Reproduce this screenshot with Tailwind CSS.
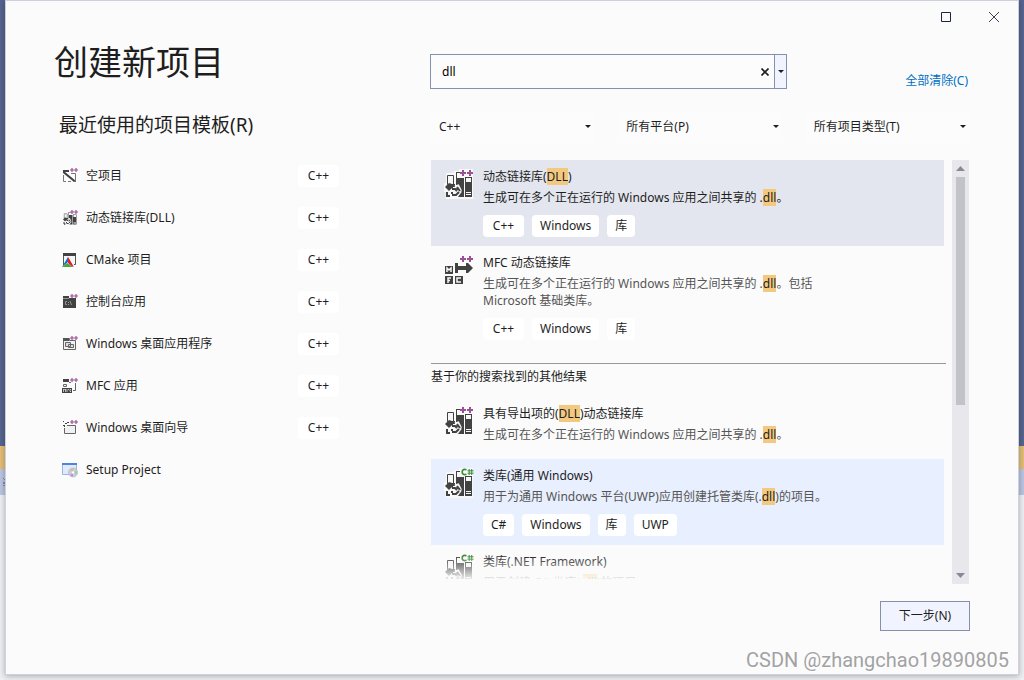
<!DOCTYPE html>
<html lang="zh-CN">
<head>
<meta charset="utf-8">
<title>创建新项目</title>
<script src="https://cdn.jsdelivr.net/npm/@tailwindcss/browser@4"></script>
</head>
<body class="relative h-screen overflow-hidden font-['Noto_Sans','Noto_Sans_CJK_SC',sans-serif] text-xs text-[#1e1e1e]">

<!-- Shared symbols -->
<svg class="hidden" aria-hidden="true">
  <symbol id="books" viewBox="0 0 32 32">
    <path d="M4.500 7.500h6v9h-6z" fill="#f6f6f6" stroke="#424242"/>
    <path d="M13 4h4v1h-3v5h7v19h-8z" fill="#424242"/>
    <path d="M14 5h2v5h5V9h-4V5z" fill="#f6f6f6"/>
    <path d="M22 9h7v20h-7z" fill="#424242"/>
    <path d="M23 10h5v4h-5z" fill="#f6f6f6"/>
    <path d="M23 24h5v1h-5zM23 26h5v1h-5z" fill="#f6f6f6"/>
    <path d="M6 15l-4 4 4 4 2-2h2v-2h2v-3H9z" fill="#424242"/>
    <path d="M4 23v5h3M9 28h4v-3h3l-3 4M8 22h4l2 2 3-2-2-4-3 1" fill="none" stroke="#f6f6f6" stroke-width="3"/>
    <path d="M4 24v4h3M9 21h3l2 2M9 27h4l3-3M14 19l3 4" fill="none" stroke="#424242" stroke-width="2"/>
    <path d="M4 28h2M9 24v2" stroke="#424242" stroke-width="2"/>
  </symbol>
  <symbol id="halo" viewBox="0 0 32 32"><path d="M3 5h8V3h5V1h14v28l1 2H3v-7H1v-9h2z" fill="#f8f8f8"/></symbol>
  <symbol id="cpp" viewBox="0 0 32 32"><path d="M19 2h2v2h2v2h-2v2h-2V6h-2V4h2zM26 2h2v2h2v2h-2v2h-2V6h-2V4h2z" fill="#9b4f96"/></symbol>
  <symbol id="csharp" viewBox="0 0 32 32"><path d="M23.500 2.800C20.500 1.800 19.200 3 19.200 5s1.300 3.200 4.300 2.200" fill="none" stroke="#388a34" stroke-width="1.700"/><path d="M26.200 2v6M28.700 2v6M24.500 3.800h6M24.500 6.200h6" fill="none" stroke="#388a34"/></symbol>
  <symbol id="pp16" viewBox="0 0 16 16"><path d="M10 0v4M8 2h4M14 0v4M12 2h4" stroke="#9b4f96" stroke-width="1.200"/></symbol>
  <symbol id="tri" viewBox="0 0 6 3"><path d="M0 0h6L3 3z" fill="currentColor"/></symbol>
</svg>

<!-- Application behind the dialog -->
<div class="absolute inset-0 flex flex-col" aria-hidden="true">
  <div class="h-[446px] bg-[#56648f]"></div>
  <div class="h-[23px] bg-[#e3bd74]"></div>
  <div class="flex h-[26px] items-center bg-[#bac5e0]">
    <svg class="ml-[3px] h-2 w-2" viewBox="0 0 8 8"><path d="M0 0h1v1H0zM1 1h1v1H1zM0 4h2v2H0zM0 7h2v1H0z" fill="#858ca5"/></svg>
  </div>
  <div class="flex-1 bg-[#eeeff3]"></div>
</div>

<div class="relative flex h-full flex-col px-[5px] pb-[5px]">
  <div class="flex min-h-0 flex-1 flex-col border border-[#ccd0df] bg-[#fbfbfb] shadow-[0_1px_6px_rgba(0,0,0,0.3)]">
    <header class="flex h-8 shrink-0 justify-end">
      <button class="flex w-12 items-center justify-center" aria-label="最大化">
        <svg class="h-[10px] w-[10px]" viewBox="0 0 10 10"><path d="M.5.5h9v9h-9z" fill="none" stroke="#1b2440"/></svg>
      </button>
      <button class="flex w-12 items-center justify-center" aria-label="关闭">
        <svg class="h-[10px] w-[10px]" viewBox="0 0 10 10"><path d="M0 0l10 10M10 0L0 10" fill="none" stroke="#3b4258"/></svg>
      </button>
    </header>

    <main class="flex min-h-0 flex-1 px-12">
      <section class="w-[376px] shrink-0 pt-[9px]">
        <h1 class="text-[34px] leading-10">创建新项目</h1>
        <h2 class="mt-[29px] pl-[5px] text-[19px] leading-7">最近使用的项目模板(R)</h2>
        <ul class="mt-4 mr-[91px] pl-2">
          <li class="flex h-[42px] items-center gap-2">
            <svg class="h-4 w-4" viewBox="0 0 16 16"><path d="M1 2h6v2H3l11 9v1h-2L1 5z" fill="#424242"/><path d="M1.500 7v6.500H4M6 13.500h3M11 13.500h2.500V5.500H9" fill="none" stroke="#777"/><use href="#pp16"/></svg>
            <span class="flex-1">空项目</span><span class="w-[41px] rounded bg-white text-center leading-[22px]">C++</span>
          </li>
          <li class="flex h-[42px] items-center gap-2">
            <svg class="h-4 w-4" viewBox="0 0 16 16"><use href="#books" width="16" height="16"/><use href="#pp16"/></svg>
            <span class="flex-1">动态链接库(DLL)</span><span class="w-[41px] rounded bg-white text-center leading-[22px]">C++</span>
          </li>
          <li class="flex h-[42px] items-center gap-2">
            <svg class="h-4 w-4" viewBox="0 0 16 16"><path d="M1.500 13V1.500h12v11H12" fill="#f6f6f6" stroke="#555"/><path d="M1 1h13v3H1z" fill="#424242"/><path d="M6 5L0 15l6-5z" fill="#2068c8"/><path d="M6 5l6 10-5-3z" fill="#e0202c"/><path d="M0 15l5-4 6 4z" fill="#45a843"/><path d="M6 5l5 10-5-4z" fill="#e0202c"/></svg>
            <span class="flex-1">CMake 项目</span><span class="w-[41px] rounded bg-white text-center leading-[22px]">C++</span>
          </li>
          <li class="flex h-[42px] items-center gap-2">
            <svg class="h-4 w-4" viewBox="0 0 16 16"><path d="M1 2h6v2h7v10H1z" fill="#424242"/><path d="M1 4.500h6M5 7.500H3.500v3H5M6.500 8v1M6.500 10v1M8 7l1.500 4" fill="none" stroke="#aaa" stroke-width=".8"/><use href="#pp16"/></svg>
            <span class="flex-1">控制台应用</span><span class="w-[41px] rounded bg-white text-center leading-[22px]">C++</span>
          </li>
          <li class="flex h-[42px] items-center gap-2">
            <svg class="h-4 w-4" viewBox="0 0 16 16"><path d="M1.500 2.500h6v2h6v9h-12z" fill="#f1f1f1" stroke="#666"/><path d="M1 2h6v3H1z" fill="#555"/><path d="M3.500 6.500h5v4h-5zM6.500 8.500h5v3h-5z" fill="#ddd" stroke="#666"/><use href="#pp16"/></svg>
            <span class="flex-1">Windows 桌面应用程序</span><span class="w-[41px] rounded bg-white text-center leading-[22px]">C++</span>
          </li>
          <li class="flex h-[42px] items-center gap-2">
            <svg class="h-4 w-4" viewBox="0 0 16 16"><path d="M1 1h6v3H1z" fill="#424242"/><path d="M1.500 6.500h3v2h-3zM7 4.500h2M13.500 5v7.500H11" fill="none" stroke="#666"/><path d="M0 10h10v5H0z" fill="#424242"/><path d="M1.500 14v-3l1 1 1-1v3M5 14v-3M6 11.500h1M9 11.500H8v2h1" fill="none" stroke="#eee" stroke-width=".7"/><use href="#pp16"/></svg>
            <span class="flex-1">MFC 应用</span><span class="w-[41px] rounded bg-white text-center leading-[22px]">C++</span>
          </li>
          <li class="flex h-[42px] items-center gap-2">
            <svg class="h-4 w-4" viewBox="0 0 16 16"><path d="M2.500 8v5.500h11v-8H5" fill="#f1f1f1" stroke="#666"/><path d="M1 1.500h1M3 3.500h2M1 5.500h1M5 2.500h1M2.500 5v2M6 2.500h1" stroke="#424242" fill="none"/><use href="#pp16"/></svg>
            <span class="flex-1">Windows 桌面向导</span><span class="w-[41px] rounded bg-white text-center leading-[22px]">C++</span>
          </li>
          <li class="flex h-[42px] items-center gap-2">
            <svg class="h-4 w-4" viewBox="0 0 16 16"><path d="M.5 1.500h14v11H.5z" fill="#dfeafb" stroke="#9cb6df"/><path d="M0 1h15v2H0z" fill="#4f83dc"/><circle cx="11" cy="10.500" r="4.500" fill="#c9cce0" stroke="#a9adc9" stroke-width=".6"/><path d="M11 10.500L8 7.500l3-1z" fill="#e3bd62"/><path d="M11 10.500l4-2v4z" fill="#9bd29b"/><path d="M11 10.500l-3 3 3 1z" fill="#c38bd0"/><circle cx="11" cy="10.500" r="1.200" fill="#fff"/></svg>
            <span class="flex-1">Setup Project</span>
          </li>
        </ul>
      </section>

      <section class="flex min-w-0 flex-1 flex-col pt-[21px] pb-[43px]">
        <div class="flex shrink-0 items-end justify-between pr-[2px]">
          <div class="flex h-[35px] w-[357px] border border-[#8591ac] bg-white/40">
            <input type="text" value="dll" aria-label="搜索模板" class="min-w-0 flex-1 bg-transparent pl-[11px] text-black outline-none">
            <button class="flex w-[18px] items-center justify-center" aria-label="清除搜索">
              <svg class="h-2 w-2" viewBox="0 0 8 8"><path d="M.5.5l7 7M7.500.5l-7 7" stroke="#1e1e1e" stroke-width="1.600"/></svg>
            </button>
            <button class="flex w-3 items-center justify-center border-l border-[#8591ac] bg-[#f1f4fe]" aria-label="搜索记录">
              <svg class="h-[3px] w-[6px]"><use href="#tri"/></svg>
            </button>
          </div>
          <a href="#" class="leading-4 text-[#0070c5]">全部清除(C)</a>
        </div>

        <div class="mt-[22px] grid shrink-0 grid-cols-3 gap-[22px]">
          <div class="relative"><select aria-label="语言" class="h-8 w-full appearance-none bg-[#fcfcfc] pl-[9px]"><option>C++</option></select><svg class="pointer-events-none absolute top-[14px] right-1 h-[3px] w-[6px]"><use href="#tri"/></svg></div>
          <div class="relative"><select aria-label="平台" class="h-8 w-full appearance-none bg-[#fcfcfc] pl-[9px]"><option>所有平台(P)</option></select><svg class="pointer-events-none absolute top-[14px] right-1 h-[3px] w-[6px]"><use href="#tri"/></svg></div>
          <div class="relative"><select aria-label="项目类型" class="h-8 w-full appearance-none bg-[#fcfcfc] pl-[9px]"><option>所有项目类型(T)</option></select><svg class="pointer-events-none absolute top-[14px] right-1 h-[3px] w-[6px]"><use href="#tri"/></svg></div>
        </div>

        <div class="mt-[17px] flex min-h-0 flex-1 pr-px pl-px">
          <div class="relative mb-[5px] min-w-0 flex-1 overflow-hidden leading-[17px]">
            <article class="mr-[2px] flex gap-2 bg-[#e3e6ee] pt-2 pb-[9px] pl-3">
              <svg class="h-8 w-8 shrink-0"><use href="#halo"/><use href="#books"/><use href="#cpp"/></svg>
              <div>
                <h3>动态链接库(<mark class="bg-[#f3c97f] text-inherit">DLL</mark>)</h3>
                <p class="mt-1">生成可在多个正在运行的 Windows 应用之间共享的 .<mark class="bg-[#f3c97f] text-inherit">dll</mark>。</p>
                <div class="mt-[9px] flex gap-2 leading-[22px]"><span class="w-[41px] rounded bg-white text-center">C++</span><span class="rounded bg-white px-2">Windows</span><span class="rounded bg-white px-2">库</span></div>
              </div>
            </article>
            <article class="mr-[2px] flex gap-2 pt-2 pb-[9px] pl-3">
              <svg class="h-8 w-8 shrink-0" viewBox="0 0 32 32"><use href="#cpp"/><path d="M12 9h3v3h8V9h2l5 5-5 5h-2v-3h-8v3h-3zM2 12h8v8H2zM2 22h8v8H2zM12 22h8v8h-8z" fill="#424242"/><path d="M4 18v-4l2 2 2-2v4M5 29v-5h3M5 26.500h2M18 24h-4v4h4" fill="none" stroke="#f6f6f6" stroke-width="1.500"/></svg>
              <div>
                <h3>MFC 动态链接库</h3>
                <p class="mt-1 max-w-[350px] text-[#555]">生成可在多个正在运行的 Windows 应用之间共享的 .<mark class="bg-[#f3c97f] text-[#1e1e1e]">dll</mark>。包括 Microsoft 基础类库。</p>
                <div class="mt-[9px] flex gap-2 leading-[22px]"><span class="w-[41px] rounded bg-white text-center">C++</span><span class="rounded bg-white px-2">Windows</span><span class="rounded bg-white px-2">库</span></div>
              </div>
            </article>
            <h2 class="mt-[14px] border-t border-[#999] pt-1 pb-3">基于你的搜索找到的其他结果</h2>
            <article class="mr-[2px] flex gap-2 pt-2 pb-4 pl-3">
              <svg class="h-8 w-8 shrink-0"><use href="#books"/><use href="#cpp"/></svg>
              <div>
                <h3>具有导出项的(<mark class="bg-[#f3c97f] text-inherit">DLL</mark>)动态链接库</h3>
                <p class="mt-1 text-[#555]">生成可在多个正在运行的 Windows 应用之间共享的 .<mark class="bg-[#f3c97f] text-[#1e1e1e]">dll</mark>。</p>
              </div>
            </article>
            <article class="mr-[2px] flex gap-2 bg-[#e8effe] pt-2 pb-[9px] pl-3">
              <svg class="h-8 w-8 shrink-0"><use href="#halo"/><use href="#books"/><use href="#csharp"/></svg>
              <div>
                <h3>类库(通用 Windows)</h3>
                <p class="mt-1 text-[#555]">用于为通用 Windows 平台(UWP)应用创建托管类库(.<mark class="bg-[#f3c97f] text-[#1e1e1e]">dll</mark>)的项目。</p>
                <div class="mt-[9px] flex gap-2 leading-[22px]"><span class="rounded bg-white px-2">C#</span><span class="rounded bg-white px-2">Windows</span><span class="rounded bg-white px-2">库</span><span class="rounded bg-white px-2">UWP</span></div>
              </div>
            </article>
            <article class="mr-[2px] flex gap-2 pt-2 pb-4 pl-3">
              <svg class="h-8 w-8 shrink-0"><use href="#books"/><use href="#csharp"/></svg>
              <div>
                <h3>类库(.NET Framework)</h3>
                <p class="mt-1 text-[#555]">用于创建 C# 类库(.<mark class="bg-[#f3c97f] text-[#1e1e1e]">dll</mark>)的项目</p>
              </div>
            </article>
            <div class="pointer-events-none absolute inset-x-0 bottom-0 h-6 bg-linear-to-b from-[#fbfbfb]/0 to-[#fbfbfb]/90"></div>
          </div>
          <div class="ml-[6px] flex w-[17px] shrink-0 flex-col items-center bg-[#e8e8ec] text-[#868999]" aria-hidden="true">
            <div class="flex h-[17px] items-center"><svg class="h-[5px] w-[9px] rotate-180" viewBox="0 0 9 5"><path d="M0 0h9L4.500 5z" fill="currentColor"/></svg></div>
            <div class="min-h-0 flex-1"><div class="h-[58.5%] w-[9px] bg-[#c2c3c9]"></div></div>
            <div class="flex h-[17px] items-center"><svg class="h-[5px] w-[9px]" viewBox="0 0 9 5"><path d="M0 0h9L4.500 5z" fill="currentColor"/></svg></div>
          </div>
        </div>

        <button class="mt-[17px] h-[30px] w-[90px] shrink-0 self-end border border-[#8591ac] bg-[#f1f4fe]">下一步(N)</button>
      </section>
    </main>
  </div>
</div>
<p class="absolute right-[15px] bottom-2 font-['Roboto',sans-serif] text-[20px] leading-6 text-[#a2a2a4] [text-shadow:1px_1px_0_#fff]">CSDN @zhangchao19890805</p>
</body>
</html>
